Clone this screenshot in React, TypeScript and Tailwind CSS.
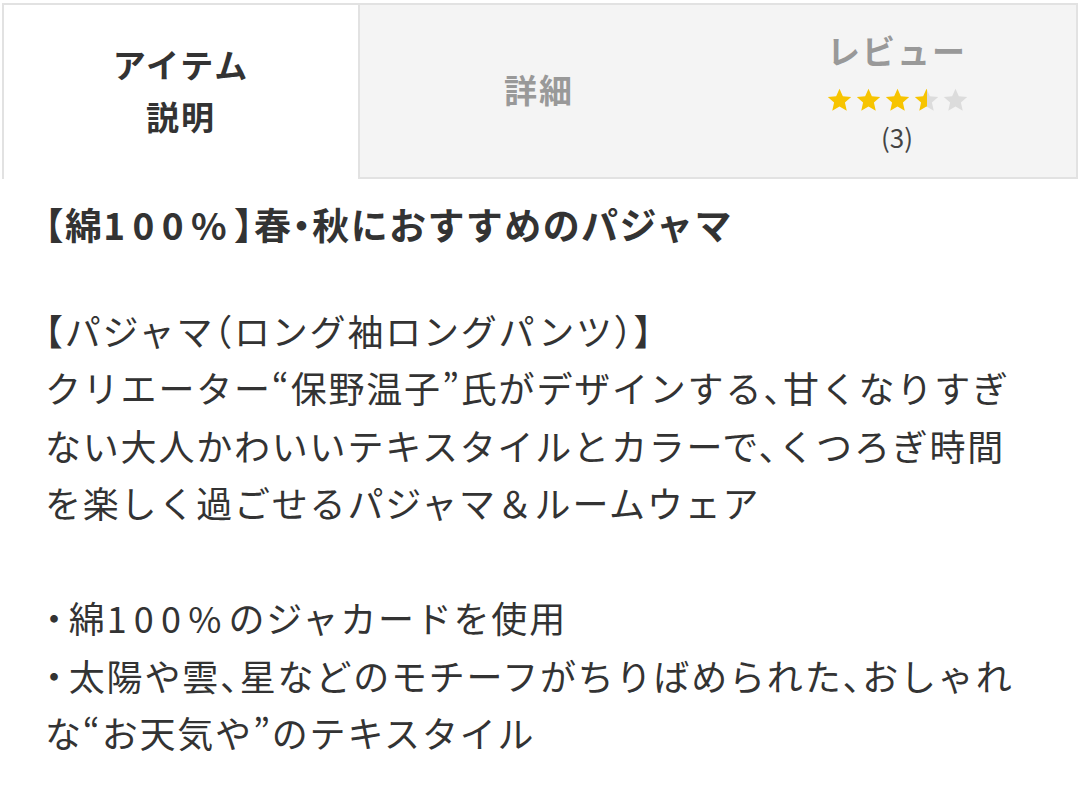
import React from "react";

const font = {
  fontFamily: '"Noto Sans CJK JP", "Noto Sans", sans-serif',
  fontFeatureSettings: '"halt"',
};

const Star = ({ fill }: { fill: number }) => {
  const id = `g${Math.round(fill * 100)}`;
  return (
    <svg width="27" height="26" viewBox="0 0 24 24">
      <defs>
        <linearGradient id={id} x1="0" x2="1" y1="0" y2="0">
          <stop offset={fill} stopColor="#f7c400" />
          <stop offset={fill} stopColor="#dcdcdc" />
        </linearGradient>
      </defs>
      <path
        d="M12 1.5l3.1 7.1 7.7.7-5.8 5.1 1.7 7.6L12 18l-6.7 4 1.7-7.6-5.8-5.1 7.7-.7z"
        fill={`url(#${id})`}
      />
    </svg>
  );
};

const Num = ({ children }: { children: React.ReactNode }) => (
  <span className="tracking-[0.2em]">{children}</span>
);

const bodyLines: React.ReactNode[] = [
  "【パジャマ（ロング袖ロングパンツ）】",
  "クリエーター“保野温子”氏がデザインする、甘くなりすぎ",
  "ない大人かわいいテキスタイルとカラーで、くつろぎ時間",
  "を楽しく過ごせるパジャマ＆ルームウェア",
  "",
  <>
    <span className="mr-[4px]">・</span>綿<Num>100%</Num>のジャカードを使用
  </>,
  <>
    <span className="mr-[4px]">・</span>太陽や雲、星などのモチーフがちりばめられた、おしゃれ
  </>,
  "な“お天気や”のテキスタイル",
];

export default function App() {
  return (
    <div lang="ja" className="w-[1080px] h-[797px] bg-white overflow-hidden" style={font}>
      {/* tabs */}
      <div className="mt-[3px] flex h-[176px] mx-[2px]">
        <div className="w-[356px] border-l-2 border-t-2 border-[#e2e2e2] bg-white flex flex-col items-center justify-center text-[33px] font-semibold tracking-[2px] text-[#333] leading-[52px] pb-1">
          <span>アイテム</span>
          <span>説明</span>
        </div>
        <div className="flex-1 flex border-2 border-[#e2e2e2] bg-[#f4f4f4]">
          <div className="w-[358px] flex items-center justify-center text-[33px] font-semibold tracking-[2px] text-[#999] pb-[2px]">
            詳細
          </div>
          <div className="flex-1 flex flex-col items-center pt-[24px]">
            <span className="text-[33px] font-semibold tracking-[2px] text-[#999] leading-[42px]">レビュー</span>
            <div className="flex mt-[16px] gap-[2px]">
              <Star fill={1} />
              <Star fill={1} />
              <Star fill={1} />
              <Star fill={0.5} />
              <Star fill={0} />
            </div>
            <span className="text-[26px] text-[#444] leading-[36px] mt-[6px]">(3)</span>
          </div>
        </div>
      </div>

      {/* content */}
      <div className="pl-[45px] pt-[17px] text-[#333] text-[36px] tracking-[1.8px] leading-[57.5px]">
        <div className="font-bold whitespace-nowrap text-[37px] tracking-[1.4px]">
          【綿<Num>100%</Num>】春・秋におすすめのパジャマ
        </div>
        <div className="mt-[48px]">
          {bodyLines.map((l, i) => (
            <div key={i} className="whitespace-nowrap h-[57.5px]">
              {l}
            </div>
          ))}
        </div>
      </div>
    </div>
  );
}
